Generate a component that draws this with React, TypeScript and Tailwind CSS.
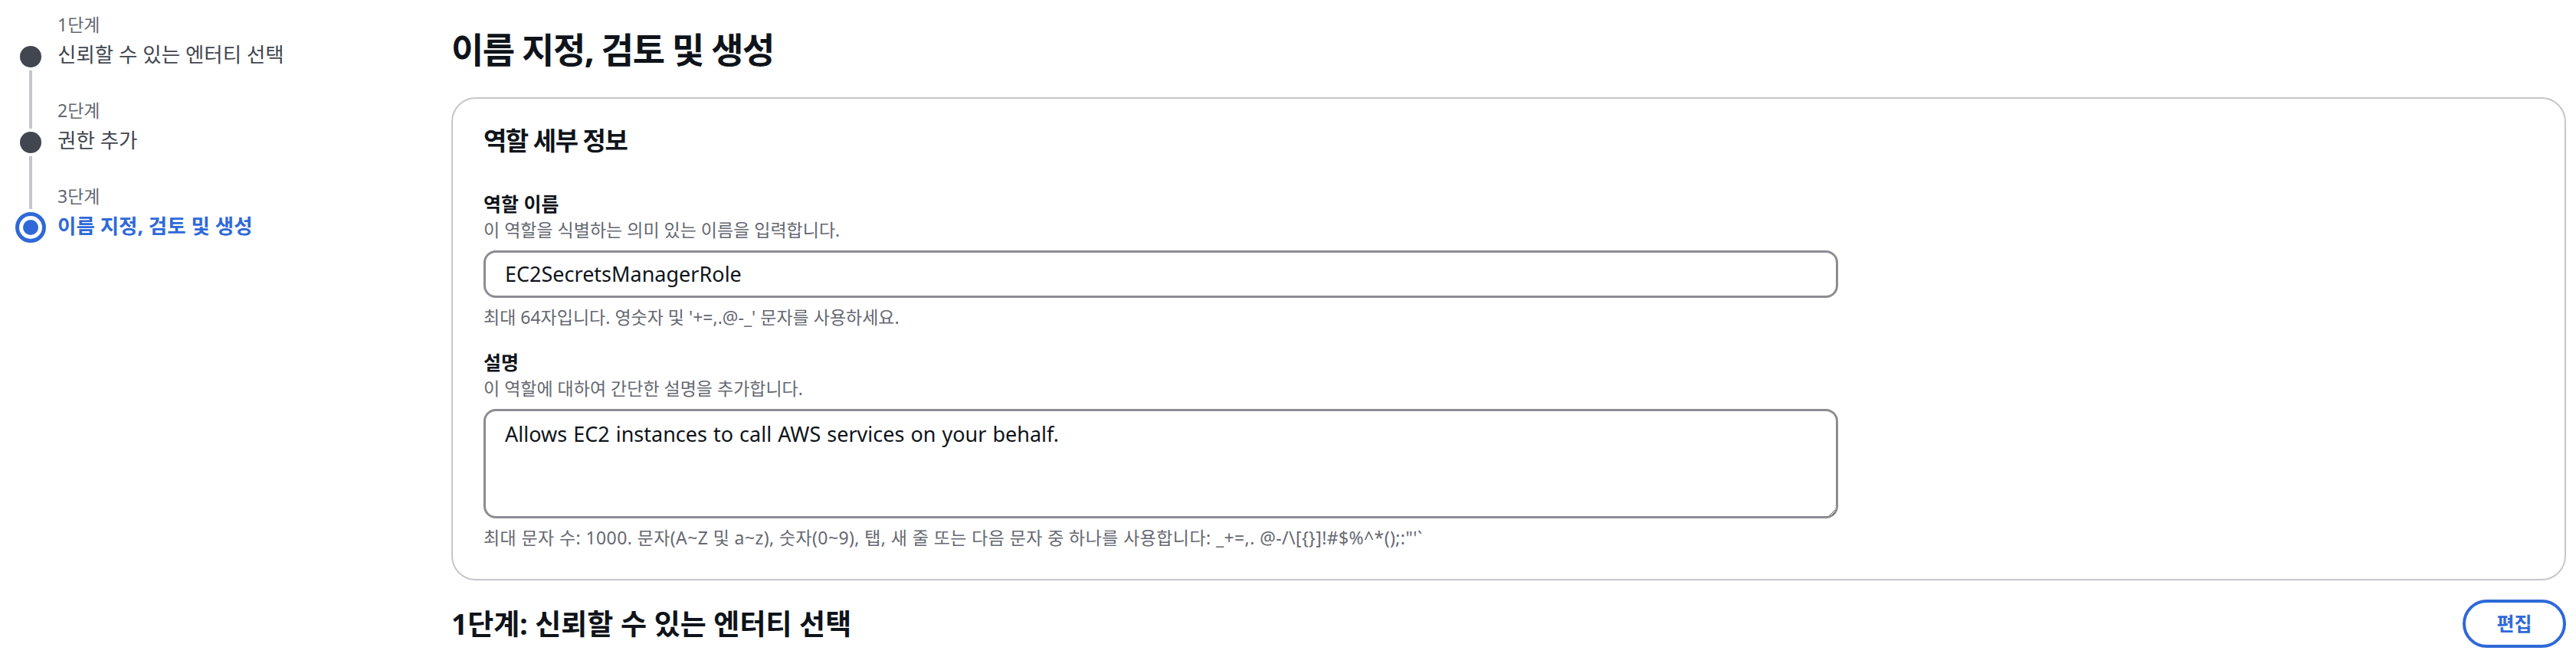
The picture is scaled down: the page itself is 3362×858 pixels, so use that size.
import React from 'react';

const steps = [
  { label: '1단계', title: '신뢰할 수 있는 엔터티 선택' },
  { label: '2단계', title: '권한 추가' },
  { label: '3단계', title: '이름 지정, 검토 및 생성' },
];

function StepNav() {
  return (
    <nav className="w-[589px] shrink-0 pl-[20px] pt-[16px]">
      {steps.map((s, i) => {
        const first = i === 0;
        const current = i === steps.length - 1;
        return (
          <div key={s.label} className="flex">
            {/* marker column: connector, dot, connector */}
            <div className="flex w-[40px] flex-col items-center">
              <div className={`w-[4px] ${current ? 'h-[33px]' : 'h-[40px]'} ${first ? '' : 'bg-[#c6c6cd]'}`} />
              {current ? (
                <div className="mt-[4px] flex h-[40px] w-[40px] items-center justify-center rounded-full border-[5px] border-[#2f69d9]">
                  <div className="h-[20px] w-[20px] rounded-full bg-[#2f69d9]" />
                </div>
              ) : (
                <>
                  <div className="mt-[4px] h-[28px] w-[28px] rounded-full bg-[#424650]" />
                  <div className="mt-[4px] w-[4px] flex-1 bg-[#c6c6cd]" />
                </>
              )}
            </div>
            <div className="ml-[15px] pb-[39px]">
              <div className="text-[23px] leading-[32px] text-[#656871]">{s.label}</div>
              <div
                className={`mt-[5px] whitespace-nowrap text-[26.5px] leading-[36px] ${
                  current ? 'font-bold text-[#2f69d9]' : 'text-[#424650]'
                }`}
              >
                {s.title}
              </div>
            </div>
          </div>
        );
      })}
    </nav>
  );
}

function Field({
  label,
  description,
  constraint,
  constraintClass = '',
  children,
  className = '',
}: {
  label: string;
  description: string;
  constraint: string;
  constraintClass?: string;
  children: React.ReactNode;
  className?: string;
}) {
  return (
    <div className={className}>
      <div className="text-[25px] font-bold leading-[36px] text-[#0f141a]">{label}</div>
      <div className="mt-[1px] text-[23px] leading-[30px] text-[#656871]">{description}</div>
      <div className="mt-[12px] w-[1768px]">{children}</div>
      <div className={`mt-[10px] whitespace-nowrap text-[23px] leading-[30px] text-[#656871] ${constraintClass}`}>
        {constraint}
      </div>
    </div>
  );
}

export default function App() {
  return (
    <div className="flex h-[858px] w-full overflow-hidden bg-white font-['Noto_Sans','Noto_Sans_CJK_KR',sans-serif]">
      <StepNav />

      <main className="flex-1 pr-[13px]">
        <h1 className="pt-[36px] text-[46px] font-bold leading-[56px] tracking-[-1.5px] text-[#0f141a]">
          이름 지정, 검토 및 생성
        </h1>

        {/* Role details */}
        <section className="mt-[35px] rounded-[32px] border-2 border-[#c6c6cd] px-[40px] pb-[39px] pt-[35px]">
          <h2 className="text-[33px] font-bold leading-[40px] tracking-[-1.5px] text-[#0f141a]">역할 세부 정보</h2>

          <Field
            className="mt-[44px]"
            label="역할 이름"
            description="이 역할을 식별하는 의미 있는 이름을 입력합니다."
            constraint="최대 64자입니다. 영숫자 및 '+=,.@-_' 문자를 사용하세요."
          >
            <div className="flex h-[62px] items-center rounded-[16px] border-[3px] border-[#8c8c94] px-[25px]">
              <input
                defaultValue="EC2SecretsManagerRole"
                className="w-full bg-transparent text-[27px] leading-[36px] text-[#0f141a] outline-none"
              />
            </div>
          </Field>

          <Field
            className="mt-[26px]"
            label="설명"
            description="이 역할에 대하여 간단한 설명을 추가합니다."
            constraintClass="tracking-[0.4px]"
            constraint={'최대 문자 수: 1000. 문자(A~Z 및 a~z), 숫자(0~9), 탭, 새 줄 또는 다음 문자 중 하나를 사용합니다: _+=,. @-/\\[{}]!#$%^*();:"\'`'}
          >
            <textarea
              defaultValue="Allows EC2 instances to call AWS services on your behalf."
              className="block h-[143px] w-full resize-y rounded-[16px] border-[3px] border-[#8c8c94] px-[25px] pt-[12px] text-[27px] leading-[36px] text-[#0f141a] outline-none [word-spacing:1px]"
            />
          </Field>
        </section>

        {/* Step 1 summary header */}
        <div className="mt-[25px] flex items-center justify-between">
          <h2 className="text-[37px] font-bold leading-[44px] text-[#0f141a]">
            1단계: 신뢰할 수 있는 엔터티 선택
          </h2>
          <button className="h-[63px] w-[135px] rounded-full border-4 border-[#2f69d9] text-[25px] font-bold text-[#2f69d9]">
            편집
          </button>
        </div>
      </main>
    </div>
  );
}
